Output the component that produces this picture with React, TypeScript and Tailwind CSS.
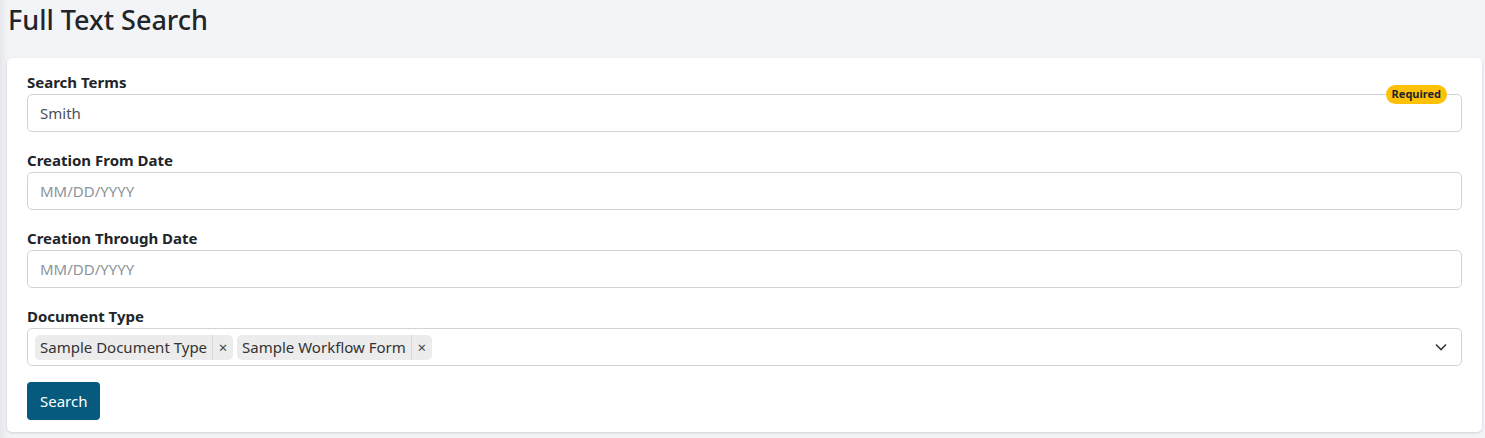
import React from "react";

const font = { fontFamily: '"Noto Sans", "Open Sans", sans-serif' };

function Label({ children }: { children: React.ReactNode }) {
  return <div className="text-[15px] font-bold leading-[20px] text-[#212529] mb-[2px]">{children}</div>;
}

function Chip({ text }: { text: string }) {
  return (
    <div className="flex items-stretch h-[25px] bg-[#ececec] rounded-[5px] text-[15px] text-[#333]">
      <span className="px-[5px] flex items-center border-r border-[#d8d8d8]">{text}</span>
      <span className="w-[20px] flex items-center justify-center text-[15px] text-[#444]">×</span>
    </div>
  );
}

export default function App() {
  return (
    <div className="w-[1485px] h-[438px] bg-[#f3f4f7] bg-[linear-gradient(to_right,#e6e7ea_0px,#f3f4f7_8px)] overflow-hidden" style={font}>
      <h1 className="pl-[8px] pt-[2px] h-[58px] text-[27px] font-medium text-[#212529] leading-[36px]">Full Text Search</h1>
      <div className="ml-[7px] mr-[3px] bg-white rounded-[5px] shadow-[0_1px_3px_rgba(0,0,0,0.15)] px-[20px] pt-[14px] pb-[12px] h-[374px]">
        <Label>Search Terms</Label>
        <div className="relative h-[38px] border border-[#ced4da] rounded-[5px] flex items-center px-[12px] text-[15px] text-[#495057]">
          Smith
          <span className="absolute right-[14px] top-[-10px] bg-[#ffc107] rounded-full px-[6px] h-[19px] flex items-center text-[11px] font-bold text-[#212529]">Required</span>
        </div>
        <div className="mt-[18px]">
          <Label>Creation From Date</Label>
          <div className="h-[38px] border border-[#ced4da] rounded-[5px] flex items-center px-[12px] text-[15px] text-[#8c949b]">MM/DD/YYYY</div>
        </div>
        <div className="mt-[18px]">
          <Label>Creation Through Date</Label>
          <div className="h-[38px] border border-[#ced4da] rounded-[5px] flex items-center px-[12px] text-[15px] text-[#8c949b]">MM/DD/YYYY</div>
        </div>
        <div className="mt-[18px]">
          <Label>Document Type</Label>
          <div className="h-[38px] border border-[#ced4da] rounded-[5px] flex items-center pl-[7px] pr-[14px] gap-[4px]">
            <Chip text="Sample Document Type" />
            <Chip text="Sample Workflow Form" />
            <div className="flex-1" />
            <svg width="12" height="8" viewBox="0 0 12 8" fill="none" stroke="#343a40" strokeWidth="1.6">
              <path d="M1 1.5 L6 6.5 L11 1.5" />
            </svg>
          </div>
        </div>
        <button className="mt-[16px] h-[38px] px-[13px] bg-[#055a7d] text-white text-[15px] rounded-[4px]">Search</button>
      </div>
    </div>
  );
}
